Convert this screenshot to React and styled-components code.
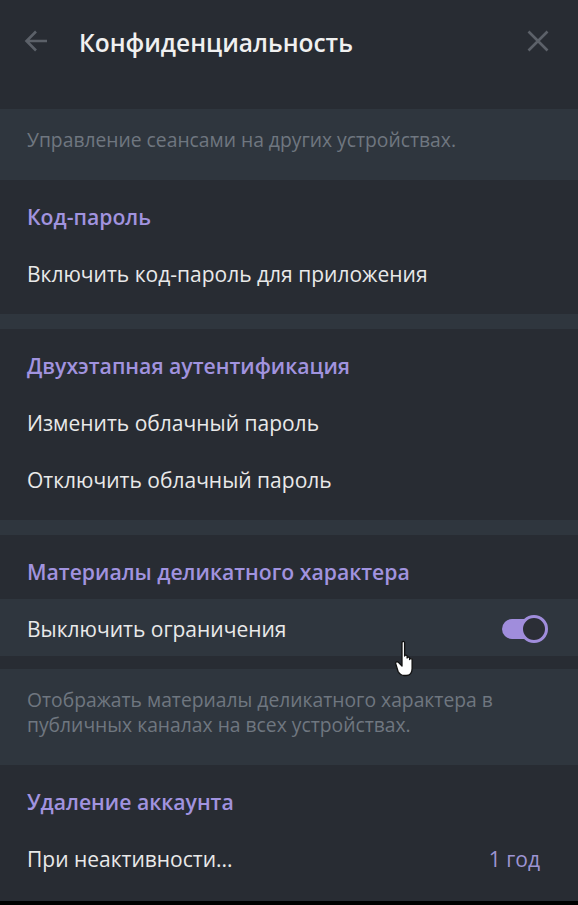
import React from "react";
import styled, { createGlobalStyle } from "styled-components";

const Global = createGlobalStyle`
  html, body {
    margin: 0;
    padding: 0;
    background: #000;
  }
  body {
    font-family: "Open Sans", "Noto Sans", sans-serif;
    -webkit-font-smoothing: antialiased;
  }
`;

const Panel = styled.div`
  width: 578px;
  height: 901px;
  background: #282c33;
  overflow: hidden;
  display: flex;
  flex-direction: column;
`;

const Header = styled.header`
  height: 84px;
  margin-bottom: 25px;
  display: flex;
  align-items: center;
  padding: 0 28px 0 24px;
`;

const IconButton = styled.button`
  width: 24px;
  height: 24px;
  padding: 0;
  border: 0;
  background: none;
  color: #5c6169;
  display: flex;
  align-items: center;
  justify-content: center;
  cursor: pointer;
  margin-top: -2px;
`;

const Title = styled.h1`
  margin: 0 0 0 31px;
  flex: 1;
  font-size: 24.5px;
  font-weight: 600;
  color: #f0f0f0;
`;

const Note = styled.div`
  background: #2f363e;
  padding: 18px 27px 27px;
  font-size: 19.3px;
  line-height: 25.5px;
  color: #6f7780;
`;

const Section = styled.section`
  padding: 16px 0 13px;
`;

const Divider = styled.div`
  height: 15px;
  background: #2f363e;
`;

const Heading = styled.h2`
  margin: 0 0 6px;
  height: 42px;
  display: flex;
  align-items: center;
  padding: 0 27px;
  font-size: 21.2px;
  font-weight: 600;
  color: #a193df;
`;

const Row = styled.div`
  position: relative;
  height: 57px;
  padding: 3px 30px 0 27px;
  box-sizing: border-box;
  display: flex;
  align-items: center;
  justify-content: space-between;
  font-size: 21px;
  color: #e9e9e9;
  background: ${(p) => (p.$hover ? "#2f363e" : "transparent")};
`;

const Value = styled.span`
  color: #9d94d2;
  margin-right: 8px;
`;

const Track = styled.div`
  position: relative;
  width: 46px;
  height: 28px;
  display: flex;
  align-items: center;

  &::before {
    content: "";
    width: 40px;
    height: 20px;
    border-radius: 10px;
    background: #a08ddc;
  }
`;

const Knob = styled.span`
  position: absolute;
  right: 0;
  top: 0;
  width: 22px;
  height: 22px;
  border-radius: 50%;
  border: 3px solid #a08ddc;
  background: #2b2e36;
`;

const Cursor = styled.svg`
  position: absolute;
  left: 394px;
  top: 41px;
  pointer-events: none;
`;

const Toggle = () => (
  <Track>
    <Knob />
  </Track>
);

const BackIcon = () => (
  <svg width="24" height="24" viewBox="0 0 24 24" fill="none" stroke="currentColor" strokeWidth="2.6">
    <path d="M23 12H3M12 2.5L2.5 12L12 21.5" />
  </svg>
);

const CloseIcon = () => (
  <svg width="22" height="22" viewBox="0 0 22 22" fill="none" stroke="currentColor" strokeWidth="2.6">
    <path d="M1.5 1.5L20.5 20.5M20.5 1.5L1.5 20.5" />
  </svg>
);

const HandCursor = () => (
  <Cursor width="28" height="40" viewBox="0 0 28 40">
    <path
      d="M8 2.5c0-1.4 2.6-1.4 2.6 0V16c0-1.2 2.5-1.2 2.5 0v2c0-1.2 2.5-1.2 2.5 0v1.5c0-1.2 2.5-1.2 2.5 0v9c0 4-2.2 7-6 7h-2c-3 0-4.5-1.5-6-4L1.8 24c-.8-1.6 1.2-3 2.6-1.6L8 26z"
      fill="#fff"
      stroke="#111"
      strokeWidth="1.3"
      strokeLinejoin="round"
    />
  </Cursor>
);

export default function App() {
  return (
    <>
      <Global />
      <Panel>
        <Header>
          <IconButton aria-label="Назад">
            <BackIcon />
          </IconButton>
          <Title>Конфиденциальность</Title>
          <IconButton aria-label="Закрыть">
            <CloseIcon />
          </IconButton>
        </Header>

        <Note>Управление сеансами на других устройствах.</Note>

        <Section>
          <Heading>Код-пароль</Heading>
          <Row>Включить код-пароль для приложения</Row>
        </Section>

        <Divider />

        <Section>
          <Heading>Двухэтапная аутентификация</Heading>
          <Row>Изменить облачный пароль</Row>
          <Row>Отключить облачный пароль</Row>
        </Section>

        <Divider />

        <Section>
          <Heading>Материалы деликатного характера</Heading>
          <Row $hover>
            Выключить ограничения
            <Toggle />
            <HandCursor />
          </Row>
        </Section>

        <Note>
          Отображать материалы деликатного характера в
          <br />
          публичных каналах на всех устройствах.
        </Note>

        <Section>
          <Heading>Удаление аккаунта</Heading>
          <Row>
            При неактивности...
            <Value>1 год</Value>
          </Row>
        </Section>
      </Panel>
    </>
  );
}
